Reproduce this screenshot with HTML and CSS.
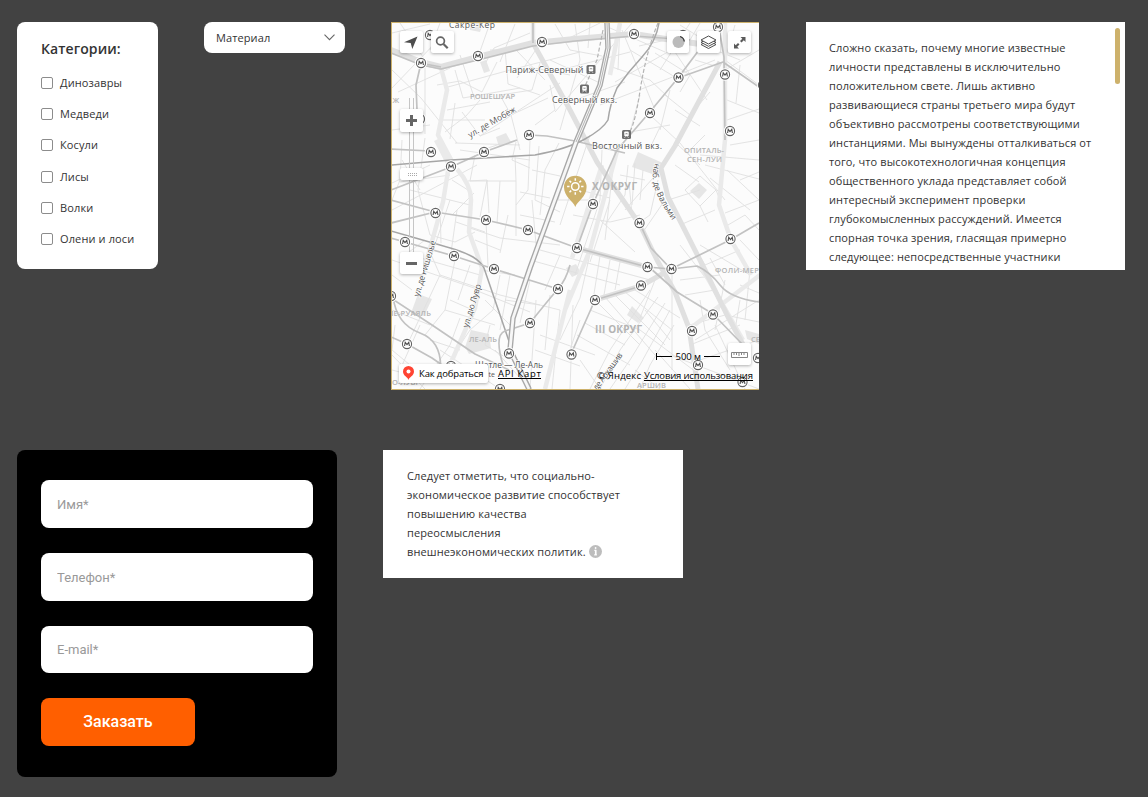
FILE: index.html
```html
<!DOCTYPE html>
<html lang="ru">
<head>
<meta charset="utf-8">
<title>Компоненты</title>
<link rel="stylesheet" href="styles.css">
</head>
<body>
<main class="page">
<section class="row">
  <div class="categories">
    <h2 class="categories-title">Категории:</h2>
    <ul class="checks">
      <li><label class="check"><input type="checkbox"><span>Динозавры</span></label></li>
      <li><label class="check"><input type="checkbox"><span>Медведи</span></label></li>
      <li><label class="check"><input type="checkbox"><span>Косули</span></label></li>
      <li><label class="check"><input type="checkbox"><span>Лисы</span></label></li>
      <li><label class="check"><input type="checkbox"><span>Волки</span></label></li>
      <li><label class="check"><input type="checkbox"><span>Олени и лоси</span></label></li>
    </ul>
  </div>

  <div class="select"><span>Материал</span>
    <svg width="11" height="7" viewBox="0 0 11 7"><path d="M.5.7 5.5 5.7 10.5.7" fill="none" stroke="#666" stroke-width="1.1"/></svg>
  </div>

  <div class="map">
    <svg class="map-canvas" viewBox="392 23 367 366" width="367" height="366">
      <defs>
        <g id="m"><circle r="6.2" fill="#fff"/><circle r="4.6" fill="#fff" stroke="#626262" stroke-width="1.1"/><path d="M-2.4 2-1.8-1.6 0 .7 1.8-1.6 2.4 2" fill="none" stroke="#505050" stroke-width="1.1"/></g>
        <g id="train"><rect x="-4.5" y="-4.5" width="9" height="9" rx="1.5" fill="#6d6d6d"/><rect x="-2.2" y="-3" width="4.4" height="4.8" rx=".8" fill="#fff"/><path d="M-1.3-1.6h2.6v1.5h-2.6zM-2 3.3l1-1.3M2 3.3 1 2" fill="#6d6d6d" stroke="#fff" stroke-width=".7"/></g>
      </defs>
      <rect x="391" y="22" width="369" height="369" fill="#fcfcfc"/>
      <g fill="#e6e6e6">
        <path d="M469 23h14l-3 9-10-2zM480 62l6-2 4 11-6 2zM496 137l10-4 5 9-12 5zM638 152l27 12-7 12-26-9zM699 183l8 7-8 9-9-8zM418 294l14 5-8 17-13-3zM471 330l18 4 2 14-22 6-4-7zM632 306l12 12-6 5-11-8zM386 120l6-4v8zM566 268l10-4 5 9-9 4zM745 330l14 4v10l-12-5z"/>
      </g>
      <g class="minor">
        <path d="M392 33 430 24M400 23 425 60M392 70 421 98 457 143M398 92 450 68M392 88 440 38M425 65 425 134M440 23 430 50M437 85 460 81 482 92 497 62M448 87 510 70 580 52M455 70 463 98 520 88M460 55 475 100M478 57 490 23M486 62 494 48 530 33M490 50 516 50 545 80M505 49 508 84 540 95M515 24 500 62M540 63 532 90 500 95M447 110 490 102M440 120 485 120M445 132 466 116 480 100M455 103 450 139M462 112 480 136 500 128M480 136 560 83M500 95 511 115 548 98M511 115 520 150M537 48 517 78M529 67 570 75M550 85 555 110 535 125M555 24 570 50 602 56M550 60 600 83M560 70 630 52M565 40 600 23M575 24 580 60 560 130M590 23 588 48M620 23 618 70M632 23 600 60 555 112M610 28 665 52M615 82 680 45M612 67 650 80 668 97M622 30 655 110M630 50 680 80M639 46 684 36M600 105 670 78 715 60M580 98 625 82M655 53 690 75M667 40 707 100M690 23 660 70M680 25 720 50M700 23 690 40 740 60M735 25 725 60 759 85M725 70 759 50M727 100 759 113M727 120 759 109M740 65 736 103M665 95 690 115 710 92M650 115 680 143 725 200M640 95 630 132 670 125M670 90 660 130M660 127 650 148M675 110 700 126M690 75 680 92M695 60 715 66"/>
        <path d="M392 130 430 125M402 140 400 180 392 200M425 138 418 190 430 235M455 143 520 145M460 150 530 160M475 155 470 181 516 181 515 155M482 150 500 144M477 165 430 190 392 210M468 181 487 180 489 213M474 193 452 215M487 180 480 217M500 181 497 223M516 181 516 236M516 142 512 160 530 168M530 140 528 190 516 205M539 146 535 200 560 212M532 170 560 176M520 192 550 198M520 215 555 222M532 200 536 244M508 215 500 253M486 220 488 266M470 228 500 238 560 245M475 240 500 250M450 200 430 260M440 206 441 243M425 240 405 255M430 235 455 242 475 232M452 180 468 190M400 182 450 175M402 160 420 190M410 190 470 205M457 210 450 260M456 222 485 232M392 183 430 165M559 143 545 170 540 215M570 160 558 200 590 200M590 135 560 225M580 190 610 198M573 215 610 222 640 215M602 150 600 200 575 275M615 150 605 240M600 220 635 252M610 200 590 262M628 165 625 195 605 225M620 175 645 180M629 182 632 215M635 163 632 205M643 170 640 200M660 170 625 210M658 180 650 215 640 222M665 200 643 232M678 145 700 165M675 165 699 182M690 150 705 135M685 190 700 176 716 190 700 206 685 190M700 206 708 222M716 190 720 200M668 200 700 190M680 225 715 210M700 155 759 160M705 165 759 179M710 178 750 210M727 170 759 200M730 145 759 140M740 180 759 172M725 213 759 200M728 225 745 215 759 230M700 245 750 275M690 240 705 265 740 250M710 258 725 285M740 240 759 260M680 245 715 290"/>
        <path d="M392 260 480 290M410 255 480 275M430 252 440 275 408 343M440 275 500 295 560 310M392 310 430 325M392 275 412 290M455 260 445 310 425 335M445 310 495 325M470 265 458 300M475 290 530 312M500 275 493 310 470 330M510 275 500 330M530 280 520 323M480 270 515 275M505 300 540 305M485 300 515 330M460 318 450 345 420 389M470 330 440 375M440 350 500 389M392 355 425 389M395 325 392 350 410 365M420 325 400 370M430 340 460 350M450 300 475 311M490 325 485 345 510 360M495 350 530 389M536 300 530 389M550 295 545 350M540 335 595 355M535 350 580 366M560 310 552 389M573 305 570 389M580 298 560 340M530 260 620 285M540 250 650 280M560 255 545 290M590 254 580 298M600 256 593 300M610 260 604 295M620 262 615 290M590 310 640 330 700 375M585 323 625 345M577 335 630 365M580 320 570 350M595 300 640 345M605 297 655 355M615 295 665 345M625 292 672 330M635 290 680 318M650 290 610 350 590 389M658 297 620 350 600 389M665 303 630 360 610 389M670 310 640 365 625 389M674 325 650 365 640 389M672 267 672 370M645 310 670 340M655 280 640 318M680 280 720 275M685 295 715 290 725 315 690 325M700 300 705 330M695 340 759 300M690 345 740 325M700 360 759 340M705 330 730 370M715 325 745 389M670 355 759 389M740 300 735 330M725 280 715 330M750 270 745 320M725 315 759 322M740 285 759 293M655 350 690 389M635 370 660 389M580 360 600 389M392 370 430 380"/>
      </g>
      <g fill="none" stroke="#eaeaea" stroke-width="4.500" stroke-linejoin="round">
        <path d="M441 68 447 90 438 135 455 167M457 169Q471 185 471 200L469 232 482 268 475 308 450 365M436 140 449 165 443 202 424 270M533 23 533 43 M725 23 725 140 719 205 731 240 751 275M620 23 610 75M602 165 572 258M619 144 590 250 565 310M545 389 570 290M700 265 743 340M688 330 760 275"/>
      </g>
      <g fill="none" stroke="#e0e0e0" stroke-width="5" stroke-linejoin="round">
        <path stroke-width="6" d="M391 50 421 62 441 67 478 57 533 43 575 39 634 34 672 40 700 44"/>
        <path d="M533 43 570 110 597 162 640 225 657 260 675 292 689 328 698 389"/>
        <path d="M720 62 675 146 661 168 668 197 705 270 727 315 746 350"/>
        <path d="M577 248 647 267M595 300 641 286 671 269"/>
      </g>
      <g class="metro">
        <path d="M391 53 421 65 441 69 478 60 533 46 575 41 634 36 690 40M533 43 533 23M441 67 425 64"/>
        <path d="M421 63 416 85 417 110"/>
        <path d="M391 190 451 167 484 152 517 140M529 135 547 136 575 141 625 153"/>
        <path class="dark" d="M391 165 451 160 535 155Q567 149 585 139T608 120Q610 104 617 88Q628 72 642 57T659 23"/>
        <path d="M391 200 435 212 486 220 528 230 577 248 647 267 671 269 730 240 759 223M391 223 435 212M391 149 430 151"/>
        <path class="dark" d="M391 231 412 237 440 245Q465 252 473 257T484 268L512 350 531 389"/>
        <path d="M391 238 405 242 454 256 494 269 558 289"/>
        <path d="M391 298 432 325 475 354 509 370M391 337 407 344 432 358 452 372M393 296Q396 324 420 333T440 375M570 265Q566 280 558 289T530 323L505 331Q494 335 503 365"/>
        <path d="M577 248 593 204 617 150 649 113 678 78 708 38M678 78 723 62 759 87M719 28 724 57 725 140M649 267 677 292 713 314 745 347M571 354 595 300 641 286M671 269 697 266Q710 272 720 285T759 302M640 224 651 248 671 269"/>
      </g>
      <path d="M607 23 608 48 600 85 576 142 530 268 513 318 510 350 529 389" fill="none" stroke="#a8a8a8" stroke-width="5.500"/>
      <path d="M607 23 608 48 600 85 576 142 530 268 513 318 510 350 529 389" fill="none" stroke="#f7f7f7" stroke-width="2.800"/>
      <path d="M607 23 608 48 600 85 576 142" fill="none" stroke="#b5b5b5"/>
      <path d="M658 23Q646 52 640 91T628 133M603 30 597 60 585 86" fill="none" stroke="#b4b4b4" stroke-width="1.200" stroke-dasharray="4 2"/>
      <path d="M409.500 98V265M413.500 98V265" stroke="#c6c6c6"/>

      <g class="district">
        <text x="470" y="99" font-size="7.500" textLength="45">РОШЕШУАР</text>
        <text x="392.500" y="103" font-size="7.500">Ж</text>
        <text x="684" y="153" font-size="7.500" textLength="40">ОПИТАЛЬ-</text>
        <text x="687" y="162" font-size="7.500" textLength="35">СЕН-ЛУИ</text>
        <text class="bold" x="592" y="190" font-size="10" textLength="45">X ОКРУГ</text>
        <text class="bold" x="595" y="333" font-size="10" textLength="47">III ОКРУГ</text>
        <text x="715" y="273" font-size="7.500" textLength="50">ФОЛИ-МЕРИ</text>
        <text x="388" y="316" font-size="7.500" textLength="43">ЛЕ-РУАЯЛЬ</text>
        <text x="469" y="342" font-size="7.500" textLength="28">ЛЕ-АЛЬ</text>
        <text x="637" y="387.500" font-size="7.500" textLength="29">АРШИВ</text>
        <text x="392" y="385" font-size="7.500">О-ЛУВР</text>
        <text x="751" y="342" font-size="7.500">СЕ</text>
      </g>
      <g class="place">
        <text x="449" y="28" font-size="8.500" textLength="46">Сакре-Кёр</text>
        <text x="505.500" y="73" font-size="9" textLength="78">Париж-Северный</text>
        <text x="552" y="102.500" font-size="9" textLength="65">Северный вкз.</text>
        <text x="592" y="149" font-size="9" textLength="70">Восточный вкз.</text>
        <text transform="translate(470 138) rotate(-30)" font-size="8.500" textLength="54">ул. де Мобёж</text>
        <text transform="translate(419 297) rotate(-73)" font-size="8.500" textLength="58">ул. де Ришелье</text>
        <text transform="translate(468 328) rotate(-73)" font-size="8.500" textLength="45">ул. дю Лувр</text>
        <path id="valmy" d="M655 163Q650 177 656 192T676 225" fill="none" stroke="none"/>
        <text font-size="8.500"><textPath href="#valmy" textLength="63">наб. де Вальми</textPath></text>
        <text transform="translate(597 391) rotate(-54)" font-size="8.500" textLength="44">де Архашив</text>
        <text x="475" y="368" font-size="8.500" textLength="68">Шатле — Ле-Аль</text>
        <text x="488.500" y="377" font-size="7">te</text>
      </g>
      <g>
        <use href="#m" x="430" y="35"/><use href="#m" x="421" y="63"/><use href="#m" x="478" y="56"/><use href="#m" x="542" y="42"/><use href="#m" x="634" y="34"/><use href="#m" x="718" y="27"/><use href="#m" x="683" y="35"/><use href="#m" x="678.500" y="77.500"/><use href="#m" x="725" y="74.500"/><use href="#m" x="650" y="113"/><use href="#m" x="730" y="131"/><use href="#m" x="420" y="119"/><use href="#m" x="529" y="135"/><use href="#m" x="431" y="152"/><use href="#m" x="484" y="152"/><use href="#m" x="451" y="166.500"/><use href="#m" x="435.500" y="213"/><use href="#m" x="486" y="220"/><use href="#m" x="528" y="230"/><use href="#m" x="405" y="242"/><use href="#m" x="454" y="256"/><use href="#m" x="494" y="269"/><use href="#m" x="577" y="248"/><use href="#m" x="593" y="204"/><use href="#m" x="639.500" y="223"/><use href="#m" x="730.500" y="239"/><use href="#m" x="647.500" y="267"/><use href="#m" x="671.500" y="269"/><use href="#m" x="558" y="289"/><use href="#m" x="595" y="300"/><use href="#m" x="641" y="285.500"/><use href="#m" x="713" y="314.500"/><use href="#m" x="692" y="331"/><use href="#m" x="530" y="323"/><use href="#m" x="509" y="353.500"/><use href="#m" x="571.500" y="354.500"/><use href="#m" x="391" y="296"/><use href="#m" x="407" y="344"/><use href="#m" x="451" y="366"/><use href="#m" x="500" y="389"/><use href="#m" x="698" y="365"/><use href="#m" x="758" y="358"/><use href="#m" x="742.500" y="382"/><use href="#m" x="763" y="85"/>
        <use href="#train" x="591" y="69.500"/><use href="#train" x="584.500" y="89"/><use href="#train" x="626.500" y="134.500"/>
      </g>
      <!-- placemark -->
      <path d="M575.300 207c-2-6-11.300-10-11.300-20a11.300 11.300 0 0 1 22.600 0c0 10-9.300 14-11.300 20z" fill="#cdb16b"/>
      <g fill="none" stroke="#fff" stroke-width="1.500"><circle cx="575.300" cy="186.500" r="3.700"/><path d="M575.300 178.300v2.400M575.300 192.300v2.400M567.100 186.500h2.400M581.100 186.500h2.400M569.500 180.700l1.700 1.700M579.400 190.600l1.700 1.700M569.500 192.300l1.700-1.700M579.400 182.400l1.700-1.700"/></g>
      <!-- controls -->
      <g class="button">
        <rect x="400" y="31" width="23" height="22" rx="2"/><rect x="431" y="31" width="23" height="22" rx="2"/>
        <rect x="667" y="31" width="22" height="22" rx="2"/><rect x="697" y="31" width="23" height="22" rx="2"/><rect x="728" y="31" width="23" height="22" rx="2"/>
        <rect x="400" y="109" width="23" height="23" rx="2"/><rect x="400" y="168" width="23" height="12" rx="2"/><rect x="400" y="252" width="23" height="22" rx="2"/>
        <rect x="728" y="343" width="23" height="22" rx="2"/><rect x="399" y="364" width="89" height="19" rx="2"/>
      </g>
      <path d="M417.500 36.500 404 42.300 410.700 43 412.300 49z" fill="#4d4d4d"/>
      <circle cx="440.500" cy="41" r="3.900" fill="none" stroke="#666" stroke-width="1.700"/><path d="m443.500 44 4.200 4.200" stroke="#666" stroke-width="2.200"/>
      <circle cx="678.500" cy="42" r="6" fill="#bbb"/><path d="M680 36.500a6 6 0 0 1 4.300 5" fill="none" stroke="#333" stroke-width="1.300"/>
      <g fill="#fff" stroke="#4d4d4d"><path d="m701 44.500 7.500-4 7.500 4-7.500 4z"/><path d="m701 42.300 7.500-4 7.500 4-7.500 4z"/><path d="m701 40 7.500-4 7.500 4-7.500 4z"/></g>
      <path d="M740.500 37h5v5l-1.700-1.700-2.300 2.300-1.500-1.500 2.300-2.300zM734 43.500l1.700 1.700 2.300-2.300 1.500 1.500-2.300 2.300 1.800 1.800h-5z" fill="#5a5a5a"/>
      <path d="M406 119h4v-4h3v4h4v3h-4v4h-3v-4h-4zM406 262h11v3h-11z" fill="#666"/>
      <path d="M408 173.500h9M408 175.500h9" stroke="#aaa" stroke-dasharray="1 1"/>
      <path d="M731.500 352.500h16v5h-16zM734 353v2M736.500 353v2M739 353v3M741.500 353v2M744 353v2" fill="none" stroke="#858585"/>
      <path d="M408.500 380c-.5-3-5.500-4-5.500-8.500a5.500 5.500 0 0 1 11 0c0 4.500-5 5.500-5.500 8.500z" fill="#f43"/><circle cx="408.500" cy="371.500" r="2" fill="#fff"/>
      <path d="M656.500 353v7M656.500 356.500H672M704 356.500H720" stroke="#000"/>
      <g class="legal">
        <text x="419" y="377" textLength="64.500">Как добраться</text>
        <text x="498" y="377" textLength="43">API Карт</text>
        <text x="597" y="379" textLength="44">© Яндекс</text>
        <text x="644" y="379" textLength="109">Условия использования</text>
        <text x="675.500" y="360" textLength="25.500">500 м</text>
        <path d="M498 378.500h43M644 380.500h109" stroke="#000"/>
      </g>
    </svg>
  </div>

  <div class="scroll">
    <p class="copy">Сложно сказать, почему многие известные<br>личности представлены в исключительно<br>положительном свете. Лишь активно<br>развивающиеся страны третьего мира будут<br>объективно рассмотрены соответствующими<br>инстанциями. Мы вынуждены отталкиваться от<br>того, что высокотехнологичная концепция<br>общественного уклада представляет собой<br>интересный эксперимент проверки<br>глубокомысленных рассуждений. Имеется<br>спорная точка зрения, гласящая примерно<br>следующее: непосредственные участники</p>
    <span class="thumb"></span>
  </div>
</section>

<section class="row">
  <form class="order">
    <input class="field" type="text" placeholder="Имя*">
    <input class="field" type="text" placeholder="Телефон*">
    <input class="field" type="text" placeholder="E-mail*">
    <button class="submit" type="button">Заказать</button>
  </form>
  <div class="note">
    <p class="copy">Следует отметить, что социально-<br>экономическое развитие способствует<br>повышению качества<br>переосмысления<br>внешнеэкономических политик. <svg class="info" width="13" height="13" viewBox="0 0 13 13"><circle cx="6.500" cy="6.500" r="6.500" fill="#bdbdbd"/><path d="M5.200 5.300h1.500v4.400M5 9.900h3" fill="none" stroke="#fff" stroke-width="1"/><path d="M6.700 4.800v5.300" stroke="#fff" stroke-width="1.600"/><circle cx="6.600" cy="3" r=".9" fill="#fff"/></svg></p>
  </div>
</section>
</main>
</body>
</html>
```
FILE: styles.css
```css
* { box-sizing: border-box; }
body {
  margin: 0;
  background: #424242;
  color: #333;
  font-family: "Open Sans", "Noto Sans", sans-serif;
  font-size: 11px;
}
.page {
  display: flex;
  flex-direction: column;
  gap: 60px;
  height: 797px;
  padding: 22px 17px 0;
  overflow: hidden;
}
.row { display: flex; align-items: flex-start; gap: 46px; }
.categories {
  width: 141px;
  height: 247px;
  padding: 16px 0 0 24px;
  background: #fff;
  border-radius: 8px;
}
.categories-title {
  margin: 0;
  font-size: 14px;
  font-weight: 600;
  line-height: 22px;
  letter-spacing: .1px;
}
.checks { margin: 7px 0 0; padding: 0; list-style: none; }
.check {
  display: flex;
  align-items: center;
  gap: 7px;
  height: 31.200px;
  letter-spacing: .12px;
  white-space: nowrap;
}
.check input {
  appearance: none;
  width: 12px;
  height: 12px;
  margin: 1px 0 0;
  border: 1px solid #8c8c8c;
  border-radius: 2px;
  background: #fff;
}
.select {
  display: flex;
  align-items: center;
  justify-content: space-between;
  width: 141px;
  height: 31px;
  padding: 0 10px 0 12px;
  background: #fff;
  border-radius: 8px;
}
.select span { margin-top: -1px; letter-spacing: .1px; }
.map {
  width: 368px;
  height: 368px;
  border: 1px solid #cdb16b;
  border-right: 0;
}
.map-canvas { display: block; }
.minor { fill: none; stroke: #e0e0e0; stroke-width: .9; }
.metro { fill: none; stroke: #c2c2c2; stroke-width: 1.700; stroke-linejoin: round; }
.metro .dark { stroke: #a6a6a6; stroke-width: 1.500; }
.district { fill: #b3b3b3; font-weight: 600; }
.district .bold { font-weight: 700; }
.place { fill: #555; stroke: #fff; stroke-width: 1.200px; paint-order: stroke; font-weight: 500; }
.button { fill: #fff; filter: drop-shadow(0 1px 1.500px rgba(0, 0, 0, .3)); }
.legal { fill: #000; font-size: 9.500px; }
.scroll {
  position: relative;
  width: 319px;
  height: 248px;
  margin-left: 1px;
  padding: 16px 0 0 23px;
  background: #fff;
}
.copy { margin: 0; line-height: 19px; letter-spacing: .11px; white-space: nowrap; }
.thumb {
  position: absolute;
  top: 6px;
  right: 5px;
  width: 5px;
  height: 56px;
  background: #cdb16b;
  border-radius: 3px;
}
.order {
  display: flex;
  flex-direction: column;
  align-items: flex-start;
  gap: 25px;
  width: 320px;
  height: 327px;
  padding: 30px 24px;
  background: #000;
  border-radius: 8px;
}
.field {
  width: 272px;
  height: 47.780px;
  padding: 1px 16px 0;
  border: 0;
  border-radius: 8px;
  background: #fff;
  font: 13px Roboto, sans-serif;
}
.field::placeholder { color: #999; }
.submit {
  width: 154px;
  height: 48px;
  padding: 0 0 1px;
  border: 0;
  border-radius: 8px;
  background: #ff5f00;
  color: #fff;
  font: 500 16px Roboto, sans-serif;
}
.note { width: 300px; height: 128px; padding: 16px 0 0 24px; background: #fff; }
.info { vertical-align: -2px; }
```
